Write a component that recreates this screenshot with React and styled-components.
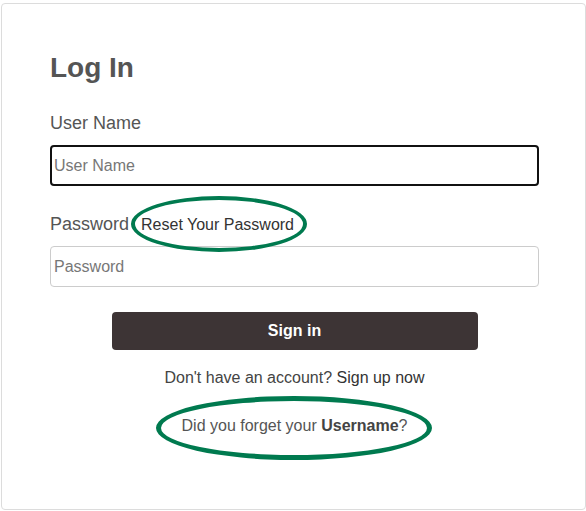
import React from "react";
import styled, { createGlobalStyle } from "styled-components";

const Global = createGlobalStyle`
  html, body { margin: 0; padding: 0; background: #fff; }
  body { font-family: "Liberation Sans", Arial, sans-serif; }
  * { box-sizing: border-box; }
`;

const Page = styled.div`
  padding: 3px 0 0 1px;
  width: 586px;
`;

const Card = styled.div`
  position: relative;
  width: 585px;
  height: 507px;
  border: 1px solid #dcdcdc;
  border-radius: 4px;
  padding: 48px 46px 0 48px;
  display: flex;
  flex-direction: column;
`;

const Title = styled.h1`
  margin: 0 0 28px 0;
  font-size: 28px;
  line-height: 32px;
  font-weight: 700;
  color: #555;
`;

const Label = styled.div`
  font-size: 18px;
  line-height: 22px;
  height: 22px;
  color: #555;
  margin-bottom: 11px;
`;

const LinkSpan = styled.span`
  position: relative;
  margin-left: 12px;
  font-size: 16px;
  color: #333;
`;

const Input = styled.input`
  display: block;
  width: 489px;
  height: 41px;
  margin: 0;
  font-family: "Liberation Sans", Arial, sans-serif;
  font-size: 16px;
  color: #333;
  background: #fff;
  border: ${(p) => (p.$focused ? "2px solid #111" : "1px solid #ccc")};
  border-radius: 4px;
  padding: 0 0 0 ${(p) => (p.$focused ? "2px" : "3px")};
  outline: none;
  margin-bottom: ${(p) => p.$mb}px;
  &::placeholder { color: #777; opacity: 1; }
`;

const Button = styled.button`
  align-self: center;
  width: 366px;
  height: 38px;
  margin: 0 0 18px 0;
  border: none;
  border-radius: 4px;
  background: #3d3435;
  color: #fff;
  font-family: "Liberation Sans", Arial, sans-serif;
  font-size: 16px;
  font-weight: 700;
`;

const Line = styled.div`
  position: relative;
  align-self: center;
  font-size: 16px;
  line-height: 20px;
  color: ${(p) => p.$color || "#444"};
  margin-bottom: ${(p) => p.$mb || 0}px;
`;

const Strong = styled.b`
  color: #444;
`;

const Dark = styled.span`
  color: #333;
`;

const Ellipse = styled.span`
  position: absolute;
  left: 50%;
  top: 50%;
  width: ${(p) => p.$w}px;
  height: ${(p) => p.$h}px;
  transform: translate(calc(-50% + ${(p) => p.$dx}px), calc(-50% + ${(p) => p.$dy}px));
  border: ${(p) => p.$stroke}px solid #007a4f;
  border-radius: 50%;
  pointer-events: none;
`;

export default function App() {
  return (
    <>
      <Global />
      <Page>
        <Card>
          <Title>Log In</Title>
          <Label>User Name</Label>
          <Input $focused placeholder="User Name" $mb={27} />
          <Label>
            Password
            <LinkSpan>
              Reset Your Password
              <Ellipse $w={176} $h={56} $dx={1} $dy={-1} $stroke={4} />
            </LinkSpan>
          </Label>
          <Input type="password" placeholder="Password" $mb={25} />
          <Button>Sign in</Button>
          <Line $mb={28}>
            Don't have an account? <Dark>Sign up now</Dark>
          </Line>
          <Line $color="#555">
            Did you forget your <Strong>Username</Strong>?
            <Ellipse $w={276} $h={64} $dx={-1} $dy={2} $stroke={5} />
          </Line>
        </Card>
      </Page>
    </>
  );
}
